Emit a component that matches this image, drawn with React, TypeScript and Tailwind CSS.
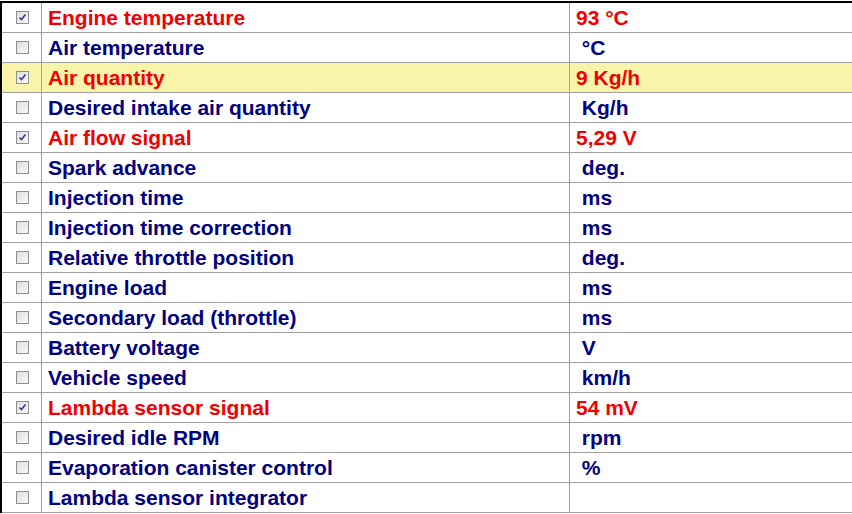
import React from "react";

interface Row {
  name: string;
  value: string;
  checked?: boolean;
  highlight?: boolean;
}

const rows: Row[] = [
  { name: "Engine temperature", value: "93 °C", checked: true },
  { name: "Air temperature", value: " °C" },
  { name: "Air quantity", value: "9 Kg/h", checked: true, highlight: true },
  { name: "Desired intake air quantity", value: " Kg/h" },
  { name: "Air flow signal", value: "5,29 V", checked: true },
  { name: "Spark advance", value: " deg." },
  { name: "Injection time", value: " ms" },
  { name: "Injection time correction", value: " ms" },
  { name: "Relative throttle position", value: " deg." },
  { name: "Engine load", value: " ms" },
  { name: "Secondary load (throttle)", value: " ms" },
  { name: "Battery voltage", value: " V" },
  { name: "Vehicle speed", value: " km/h" },
  { name: "Lambda sensor signal", value: "54 mV", checked: true },
  { name: "Desired idle RPM", value: " rpm" },
  { name: "Evaporation canister control", value: " %" },
  { name: "Lambda sensor integrator", value: "" },
];

function CheckBox({ checked }: { checked?: boolean }) {
  return (
    <svg width="13" height="13" viewBox="0 0 13 13">
      <defs>
        <linearGradient id="cbg" x1="0" y1="0" x2="1" y2="1">
          <stop offset="0" stopColor="#dcdcdc" />
          <stop offset="1" stopColor="#fbfbfb" />
        </linearGradient>
      </defs>
      <rect x="0.5" y="0.5" width="12" height="12" fill="url(#cbg)" stroke="#8f8f8f" />
      {checked && (
        <path d="M3.5 6.5 L5.5 8.5 L9.5 3.5" fill="none" stroke="#3a3a8c" strokeWidth="1.6" />
      )}
    </svg>
  );
}

export default function App() {
  return (
    <div
      className="w-[852px] h-[514px] overflow-hidden bg-white pt-px"
      style={{ fontFamily: "'Liberation Sans', Arial, sans-serif" }}
    >
      <div className="border-t-2 border-l-2 border-black w-[870px]">
        {rows.map((r) => (
          <div
            key={r.name}
            className={`flex h-[30px] border-b border-[#a0a0a0] ${r.highlight ? "bg-[#f8f5aa]" : "bg-white"}`}
          >
            <div className="w-[40px] shrink-0 flex items-center justify-center border-r border-[#a0a0a0] pl-[2px]">
              <CheckBox checked={r.checked} />
            </div>
            <div
              className={`w-[528px] shrink-0 flex items-center pl-[6px] pt-px border-r border-[#a0a0a0] text-[21px] font-bold ${r.checked ? "text-[#f00000]" : "text-[#000080]"}`}
            >
              {r.name}
            </div>
            <div
              className={`flex-1 flex items-center pl-[6px] pt-px whitespace-pre text-[21px] font-bold ${r.checked ? "text-[#f00000]" : "text-[#000080]"}`}
            >
              {r.value}
            </div>
          </div>
        ))}
      </div>
    </div>
  );
}
